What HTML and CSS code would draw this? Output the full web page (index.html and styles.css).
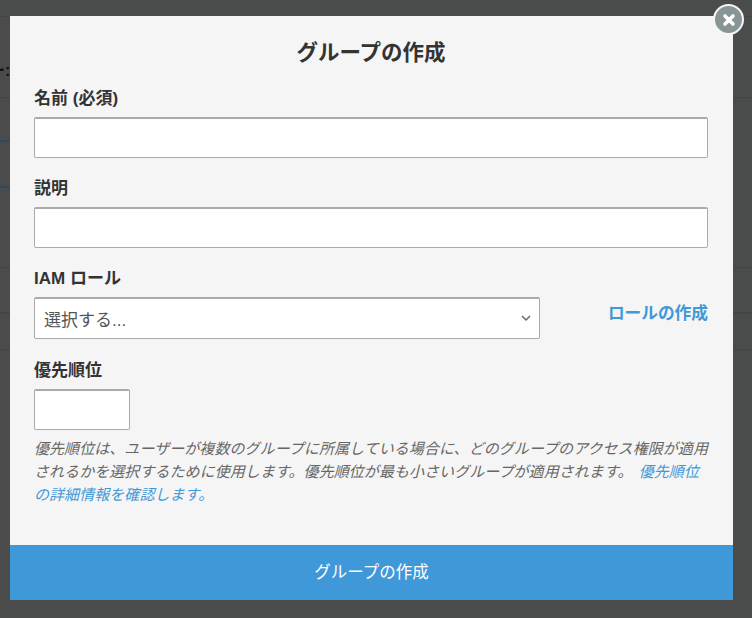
FILE: index.html
```html
<!DOCTYPE html>
<html lang="ja">
<head>
    <meta charset="UTF-8">
    <meta name="viewport" content="width=device-width, initial-scale=1.0">
    <title>グループの作成</title>
    <link rel="stylesheet" href="styles.css">
</head>
<body>
    <div class="backdrop">
        <div class="bg-row bg-header"></div>
        <div class="bg-row bg-nav"><span class="bg-title">ー:</span></div>
        <div class="bg-row bg-tab bg-tab-first"></div>
        <div class="bg-row bg-tab"></div>
        <div class="bg-row bg-table-head"></div>
        <div class="bg-row bg-table-row"></div>
        <div class="bg-row bg-table-last"></div>
    </div>

    <div class="modal">
        <button class="close" type="button" aria-label="閉じる">
            <svg width="16" height="16" viewBox="0 0 16 16">
                <path d="M4 4l8 8M12 4l-8 8" stroke="#fff" stroke-width="3.6" stroke-linecap="round"/>
            </svg>
        </button>
        <form class="modal-body">
            <h1>グループの作成</h1>

            <label for="name">名前 (必須)</label>
            <input type="text" id="name" class="field">

            <label for="desc">説明</label>
            <input type="text" id="desc" class="field">

            <label for="role">IAM ロール</label>
            <div class="role-row">
                <div class="select" id="role">
                    <span>選択する...</span>
                    <svg width="10" height="7" viewBox="0 0 10 7">
                        <path d="M1 1l4 4 4-4" fill="none" stroke="#666" stroke-width="1.500"/>
                    </svg>
                </div>
                <a href="#" class="role-link">ロールの作成</a>
            </div>

            <label for="priority">優先順位</label>
            <input type="text" id="priority" class="field field-small">
            <p class="help">優先順位は、ユーザーが複数のグループに所属している場合に、どのグループのアクセス権限が適用されるかを選択するために使用します。優先順位が最も小さいグループが適用されます。 <a href="#">優先順位の詳細情報を確認します。</a></p>
        </form>
        <button class="submit" type="button">グループの作成</button>
    </div>
</body>
</html>
```

FILE: styles.css
```css
html, body {
    margin: 0;
    height: 618px;
    overflow: hidden;
}
body {
    background-color: #4a4b4b;
    font-family: 'Liberation Sans', 'Noto Sans CJK JP', sans-serif;
    color: #333;
    position: relative;
}
.backdrop {
    position: absolute;
    top: 0;
    left: 0;
    width: 100%;
}
.bg-row {
    box-sizing: border-box;
    border-bottom: 1px solid #444545;
}
.bg-header {
    height: 17px;
}
.bg-nav {
    height: 81px;
    padding-top: 44px;
}
.bg-title {
    display: block;
    font-size: 16px;
    line-height: 20px;
    color: #111;
    font-weight: bold;
    margin-left: -11px;
}
.bg-tab {
    height: 46px;
    border-bottom: 2px solid;
    border-image: linear-gradient(90deg, #2d4a60 50%, #4a4b4b 50%) 1;
}
.bg-tab-first {
    height: 44px;
}
.bg-table-head {
    height: 80px;
}
.bg-table-row {
    height: 46px;
    border-bottom-width: 2px;
}
.bg-table-last {
    height: 36px;
}
.modal {
    position: absolute;
    top: 16px;
    left: 10px;
    width: 723px;
    height: 584px;
    background-color: #f5f5f5;
    display: flex;
    flex-direction: column;
}
.close {
    position: absolute;
    top: -12px;
    right: -11px;
    width: 31px;
    height: 31px;
    padding: 0;
    border: 2px solid #f5f5f5;
    border-radius: 50%;
    background-color: #879596;
    display: flex;
    align-items: center;
    justify-content: center;
}
.modal-body {
    flex: 1;
    padding: 0 25px 0 24px;
}
h1 {
    margin: 0;
    padding-top: 22px;
    font-size: 21.5px;
    line-height: 30px;
    text-align: center;
    color: #333;
}
label {
    display: block;
    margin-bottom: 6px;
    font-size: 17px;
    line-height: 24px;
    font-weight: bold;
}
h1 + label {
    margin-top: 19px;
}
.field {
    display: block;
    width: 100%;
    height: 41px;
    box-sizing: border-box;
    background-color: #fff;
    border: 1px solid #aaa;
    border-top-width: 2px;
    border-radius: 2px;
    margin-bottom: 19px;
}
.field-small {
    width: 96px;
    margin-bottom: 0;
}
.role-row {
    display: flex;
    justify-content: space-between;
    align-items: center;
    margin-bottom: 20px;
}
.select {
    width: 506px;
    height: 42px;
    box-sizing: border-box;
    padding: 0 8px 0 9px;
    background-color: #fff;
    border: 1px solid #aaa;
    border-top-width: 2px;
    border-radius: 2px;
    display: flex;
    align-items: center;
    justify-content: space-between;
    font-size: 17px;
    color: #555;
}
a {
    color: #3f98d8;
    text-decoration: none;
}
.role-link {
    font-size: 16.7px;
    font-weight: bold;
    margin-bottom: 12px;
}
.help {
    margin: 7px -4px 0 0;
    font-size: 15px;
    line-height: 23px;
    font-style: italic;
    letter-spacing: 0.06px;
    word-spacing: 2px;
    color: #666;
}
.submit {
    height: 55px;
    padding: 0 0 4px;
    border: none;
    background-color: #3f98d8;
    color: #fff;
    font-family: inherit;
    font-size: 16.5px;
}
```
